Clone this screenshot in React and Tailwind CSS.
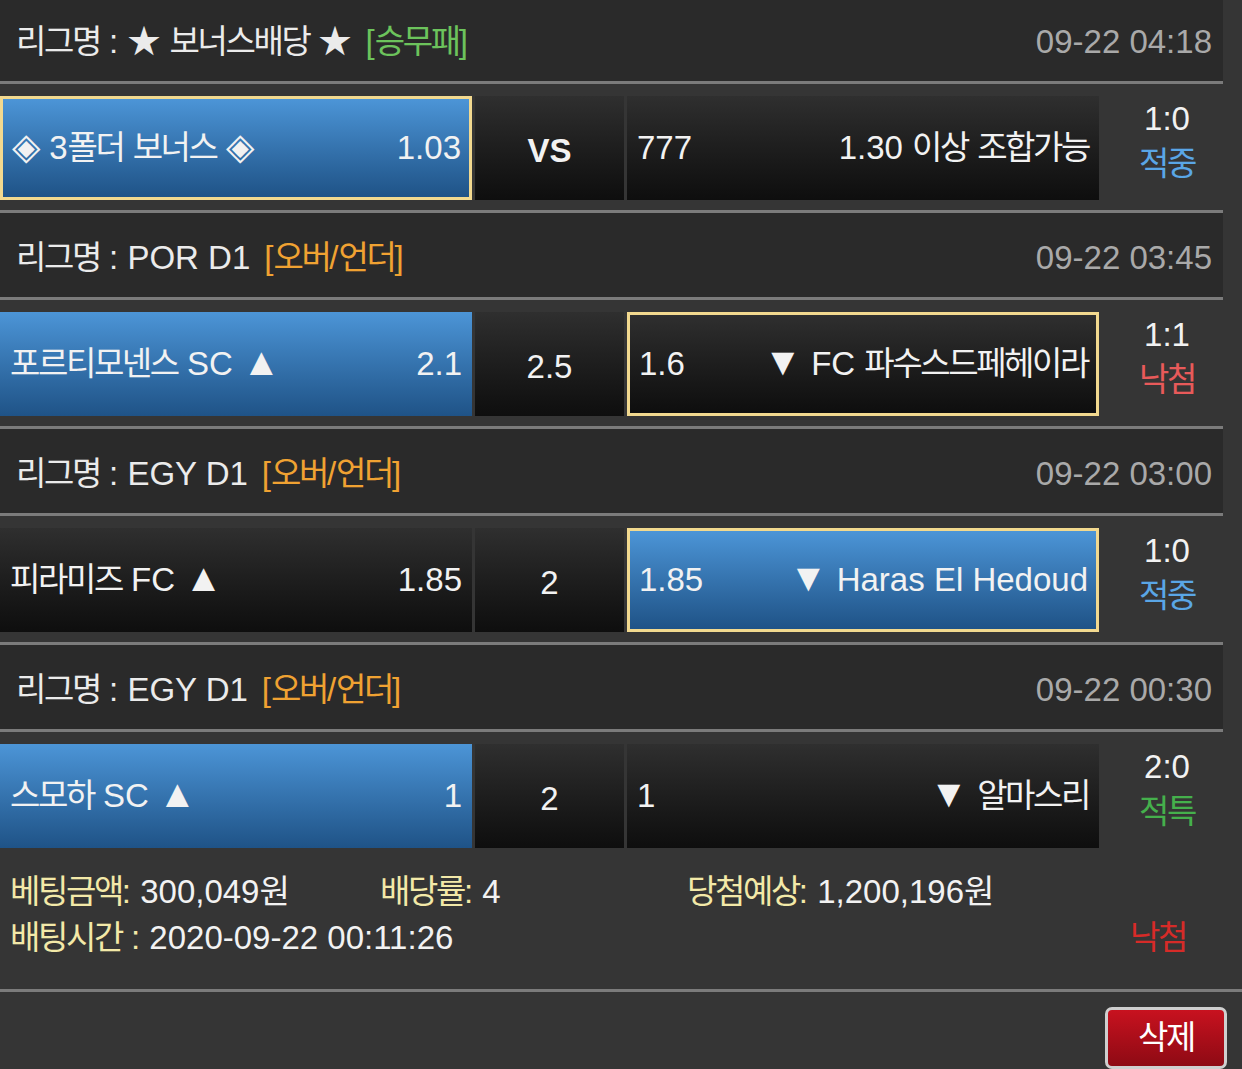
import React from "react";

function K({ children }) {
  const text = String(children);
  const parts = text.split(/([\uAC00-\uD7A3]+|[▲▼]|◈)/);
  return (
    <>
      {parts.map((p, i) => {
        if (!p) return null;
        if (p === "▲" || p === "▼")
          return (
            <span key={i} className="text-[39px] leading-[0]">
              {p}
            </span>
          );
        if (p === "◈")
          return (
            <span key={i} className="text-[37px] leading-[0]">
              {p}
            </span>
          );
        if (/[\uAC00-\uD7A3]/.test(p))
          return (
            <span key={i} className="tracking-[-2.4px]">
              {p}
            </span>
          );
        return <React.Fragment key={i}>{p}</React.Fragment>;
      })}
    </>
  );
}

const blocks = [
  {
    league: "★ 보너스배당 ★",
    tag: "[승무패]",
    tagColor: "text-[#6cc35c]",
    date: "09-22 04:18",
    first: true,
    left: { name: "◈ 3폴더 보너스 ◈", odd: "1.03", blue: true, sel: true },
    mid: "VS",
    midBold: true,
    right: { odd: "777", name: "1.30 이상 조합가능", blue: false, sel: false },
    score: "1:0",
    result: "적중",
    resultColor: "text-[#5aa6e6]",
  },
  {
    league: "POR D1",
    tag: "[오버/언더]",
    tagColor: "text-[#f0a232]",
    date: "09-22 03:45",
    left: { name: "포르티모넨스 SC ▲", odd: "2.1", blue: true, sel: false },
    mid: "2.5",
    right: { odd: "1.6", name: "▼ FC 파수스드페헤이라", blue: false, sel: true },
    score: "1:1",
    result: "낙첨",
    resultColor: "text-[#e85a5a]",
  },
  {
    league: "EGY D1",
    tag: "[오버/언더]",
    tagColor: "text-[#f0a232]",
    date: "09-22 03:00",
    left: { name: "피라미즈 FC ▲", odd: "1.85", blue: false, sel: false },
    mid: "2",
    right: { odd: "1.85", name: "▼ Haras El Hedoud", blue: true, sel: true },
    score: "1:0",
    result: "적중",
    resultColor: "text-[#5aa6e6]",
  },
  {
    league: "EGY D1",
    tag: "[오버/언더]",
    tagColor: "text-[#f0a232]",
    date: "09-22 00:30",
    last: true,
    left: { name: "스모하 SC ▲", odd: "1", blue: true, sel: false },
    mid: "2",
    right: { odd: "1", name: "▼ 알마스리", blue: false, sel: false },
    score: "2:0",
    result: "적특",
    resultColor: "text-[#45b04c]",
  },
];

function Cell({ blue, sel, children }) {
  const bg = blue
    ? "bg-linear-to-b from-[#4c95d7] to-[#1f5387]"
    : "bg-linear-to-b from-[#2f2f2f] to-[#0e0e0e]";
  const border = sel ? "border-[3px] border-[#f2d98f]" : "";
  return (
    <div
      className={`w-[472px] h-[104px] flex items-center justify-between ${
        sel ? "pl-[9px] pr-[8px]" : "pl-[10px] pr-[10px]"
      } ${bg} ${border}`}
    >
      {children}
    </div>
  );
}

function Block({ b }) {
  return (
    <div className="w-[1223px]">
      <div
        className={`${
          b.first ? "h-[84px] pt-[3px]" : "h-[87px] pt-[6px]"
        } bg-[#2a2a2a] border-b-[3px] border-[#7b7b7b] flex items-center justify-between pl-[16px] pr-[11px]`}
      >
        <div className="text-[#ebebeb]">
          <K>{"리그명 : " + b.league}</K>
          <span className={`ml-[14px] ${b.tagColor}`}>
            <K>{b.tag}</K>
          </span>
        </div>
        <div className="text-[#a9a9a9]">{b.date}</div>
      </div>
      <div
        className={`pt-[12px] flex ${
          b.last ? "h-[126px]" : "border-b-[3px] border-[#7b7b7b] h-[129px]"
        }`}
      >
        <Cell blue={b.left.blue} sel={b.left.sel}>
          <span>
            <K>{b.left.name}</K>
          </span>
          <span>{b.left.odd}</span>
        </Cell>
        <div className="ml-[3px] w-[149px] h-[104px] flex items-center justify-center pt-[6px] bg-linear-to-b from-[#2f2f2f] to-[#0e0e0e]">
          <span className={b.midBold ? "font-bold" : ""}>{b.mid}</span>
        </div>
        <div className="ml-[3px]">
          <Cell blue={b.right.blue} sel={b.right.sel}>
            <span>{b.right.odd}</span>
            <span>
              <K>{b.right.name}</K>
            </span>
          </Cell>
        </div>
        <div className="w-[124px] pl-[12px] flex flex-col items-center leading-[45px]">
          <div>{b.score}</div>
          <div className={b.resultColor}>
            <K>{b.result}</K>
          </div>
        </div>
      </div>
    </div>
  );
}

export default function App() {
  return (
    <div className="w-[1242px] h-[1069px] overflow-hidden bg-[#353535] text-[#f2f2f2] text-[33px] leading-[40px] font-['Liberation_Sans','Noto_Sans_CJK_KR',sans-serif]">
      {blocks.map((b, i) => (
        <Block key={i} b={b} />
      ))}
      <div className="pt-[11px] pb-[28px] leading-[46px] border-b-[3px] border-[#7b7b7b]">
        <div className="flex pl-[10px]">
          <div className="w-[370px]">
            <span className="text-[#f3e9a8]">
              <K>베팅금액:</K>
            </span>{" "}
            300,049<K>원</K>
          </div>
          <div className="w-[307px]">
            <span className="text-[#f3e9a8]">
              <K>배당률:</K>
            </span>{" "}
            4
          </div>
          <div>
            <span className="text-[#f3e9a8]">
              <K>당첨예상:</K>
            </span>{" "}
            1,200,196<K>원</K>
          </div>
        </div>
        <div className="flex pl-[10px] w-[1223px] justify-between">
          <div>
            <span className="text-[#f3e9a8]">
              <K>배팅시간 :</K>
            </span>{" "}
            2020-09-22 00:11:26
          </div>
          <div className="w-[124px] pr-[6px] text-center text-[#d62b28]">
            <K>낙첨</K>
          </div>
        </div>
      </div>
      <div className="flex justify-end pr-[15px] pt-[15px]">
        <button className="w-[122px] h-[62px] rounded-[7px] border-[3px] border-[#cfcfcf] bg-linear-to-b from-[#c8121f] to-[#8e0a14] text-white text-[33px] flex items-center justify-center">
          <K>삭제</K>
        </button>
      </div>
    </div>
  );
}
